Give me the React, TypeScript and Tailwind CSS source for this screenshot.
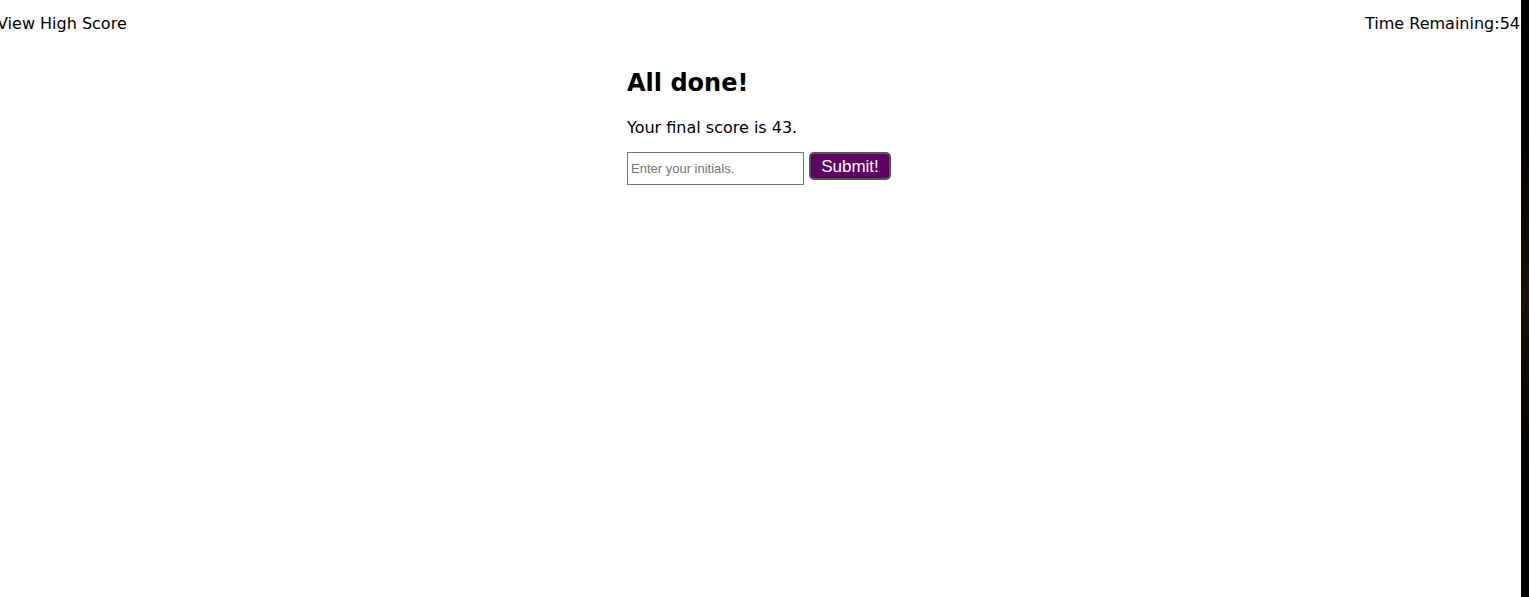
export default function App() {
  return (
    <div className="flex h-[597px] w-[1529px] overflow-hidden bg-white" style={{ fontFamily: '"DejaVu Sans", Verdana, sans-serif' }}>
      <div className="flex-1 flex flex-col">
        <div className="flex justify-between items-center h-[46px] pt-[2px] text-[16px] text-black">
          <span className="ml-[-3px]">View High Score</span>
          <span className="mr-[1px]">Time Remaining:54</span>
        </div>
        <div className="w-[275px] ml-[627px] mt-[20px]">
          <h1 className="text-[24px] font-bold leading-[34px]">All done!</h1>
          <p className="text-[16px] mt-[18px] leading-[20px]">Your final score is 43.</p>
          <div className="flex items-start gap-[5px] mt-[14px]">
            <input
              className="w-[177px] h-[33px] border border-[#767676] px-[3px] text-[13px] placeholder:text-[#757575]"
              style={{ fontFamily: '"Liberation Sans", Arial, sans-serif' }}
              placeholder="Enter your initials."
            />
            <button
              className="h-[28px] w-[82px] rounded-[5px] border-2 border-[#555] bg-[#5e0361] text-white text-[17px] leading-none"
              style={{ fontFamily: '"Liberation Sans", Arial, sans-serif' }}
            >
              Submit!
            </button>
          </div>
        </div>
      </div>
      <div className="w-[8px] h-full bg-gradient-to-b from-black via-[#1a1208] to-black" />
    </div>
  );
}
